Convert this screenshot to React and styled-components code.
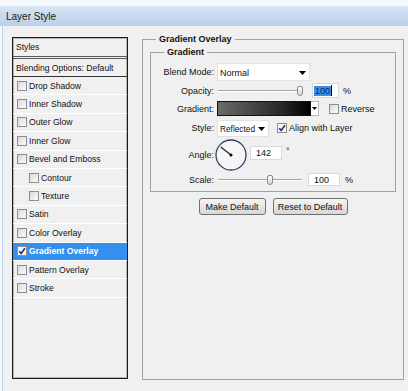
import React from 'react';
import styled, { createGlobalStyle } from 'styled-components';

const GlobalStyle = createGlobalStyle`
  html, body {
    margin: 0;
    padding: 0;
  }
  body {
    width: 408px;
    height: 391px;
    overflow: hidden;
    background: #f5f8fc;
    font-family: "Liberation Sans", Arial, sans-serif;
    color: #111111;
  }
`;

const Window = styled.div`
  height: 391px;
  padding-top: 6px;
  box-sizing: border-box;
  display: flex;
  flex-direction: column;
`;

const TitleBar = styled.div`
  height: 20px;
  display: flex;
  align-items: center;
  padding-left: 6px;
  background: linear-gradient(#d8e5f4, #b9cfe9);
  font-size: 10px;
  color: #1a1a1a;
`;

const Body = styled.div`
  flex: 1;
  margin-left: 2px;
  border-left: 1px solid #bcd0e8;
  background: #f0f0f0;
  display: flex;
  align-items: flex-start;
  gap: 14px;
  padding: 7px 4px 0 9px;
`;

const StylesPanel = styled.div`
  margin-top: 4px;
  width: 116px;
  height: 342px;
  box-sizing: border-box;
  border: 1px solid #1c1c1c;
  box-shadow: inset 0 0 0 1px rgba(0, 0, 0, 0.25);
  background: #f0f0f0;
  font-size: 8.6px;
`;

const PanelHead = styled.div`
  height: 18px;
  display: flex;
  align-items: center;
  padding-left: 3px;
  border-bottom: 3px double #5a5a5a;
`;

const BlendingRow = styled.div`
  height: 17px;
  display: flex;
  align-items: center;
  padding-left: 3px;
  border-bottom: 1px solid #333333;
`;

const StyleRow = styled.div`
  height: 18.4px;
  box-sizing: border-box;
  display: flex;
  align-items: center;
  gap: 2px;
  padding-left: ${(p) => (p.$indent ? 16 : 4)}px;
  border-bottom: 1px solid #ffffff;
  background: ${(p) => (p.$active ? '#3390ee' : 'transparent')};
  color: ${(p) => (p.$active ? '#ffffff' : '#111111')};
  font-weight: ${(p) => (p.$active ? 'bold' : 'normal')};
`;

const Box = styled.span`
  flex: none;
  width: 10px;
  height: 10px;
  box-sizing: border-box;
  border: 1px solid #8c8d8d;
  background: ${(p) => (p.$checked ? '#f8f8f8' : 'linear-gradient(135deg, #d9d9d9, #fbfbfb)')};
  display: inline-flex;
  align-items: center;
  justify-content: center;
`;

const Group = styled.fieldset`
  margin: 0;
  min-width: 0;
  box-sizing: border-box;
  width: ${(p) => p.$w}px;
  height: ${(p) => p.$h}px;
  border: 1px solid #a2a2a2;
  padding: ${(p) => p.$pad};
`;

const Legend = styled.legend`
  font-size: 9px;
  font-weight: bold;
  line-height: 12px;
  padding: 0 3px;
  margin-left: ${(p) => p.$ml}px;
`;

const FieldRow = styled.div`
  display: flex;
  align-items: center;
  height: ${(p) => p.$h}px;
  margin-top: ${(p) => p.$mt || 0}px;
  font-size: 9px;
`;

const Label = styled.span`
  flex: none;
  width: 63px;
  padding-right: 3px;
  text-align: right;
`;

const Select = styled.div`
  flex: none;
  width: ${(p) => p.$w}px;
  height: ${(p) => p.$h}px;
  box-sizing: border-box;
  background: #ffffff;
  border: 1px solid #e2e2e2;
  display: flex;
  align-items: center;
  justify-content: space-between;
  padding: 2px 3px 0 2px;
  font-size: ${(p) => p.$fs || 9}px;
  white-space: nowrap;
`;

const Slider = styled.div`
  position: relative;
  flex: none;
  width: ${(p) => p.$w}px;
  height: 12px;
  margin-left: 1px;
  &::before {
    content: '';
    position: absolute;
    left: 0;
    right: 0;
    top: 5px;
    height: 1px;
    background: #a4a4a4;
    border-bottom: 1px solid #ffffff;
  }
`;

const Thumb = styled.span`
  position: absolute;
  top: 1px;
  width: 6px;
  height: 10px;
  box-sizing: border-box;
  border: 1px solid #8a8a8a;
  border-radius: 2px 2px 3px 3px;
  background: linear-gradient(#fdfdfd, #d6d6d6);
`;

const NumInput = styled.div`
  flex: none;
  width: ${(p) => p.$w}px;
  height: ${(p) => p.$h}px;
  box-sizing: border-box;
  margin-left: ${(p) => p.$ml}px;
  margin-bottom: ${(p) => p.$mb || 0}px;
  background: #ffffff;
  border: 1px solid #d9d9d9;
  display: flex;
  align-items: center;
  padding-left: ${(p) => p.$pl}px;
`;

const Selected = styled.span`
  background: #3b8ee6;
  color: #0d2470;
  padding: 0 1px;
`;

const Caret = styled.span`
  width: 1px;
  height: 11px;
  background: #000000;
`;

const Unit = styled.span`
  margin-left: ${(p) => p.$ml}px;
  align-self: ${(p) => (p.$top ? 'flex-start' : 'center')};
  margin-top: ${(p) => (p.$top ? 7 : 0)}px;
`;

const Swatch = styled.div`
  width: 94px;
  height: 15px;
  box-sizing: border-box;
  border: 1px solid #111111;
  background: linear-gradient(to right, #6b6b6b, #262626 70%, #000000);
`;

const SwatchDrop = styled.div`
  width: 8px;
  height: 15px;
  box-sizing: border-box;
  border: 1px solid #b8b8b8;
  border-left: none;
  background: #ffffff;
  display: flex;
  align-items: center;
  justify-content: center;
`;

const CheckLabel = styled.label`
  display: flex;
  align-items: center;
  gap: 2px;
  margin-left: ${(p) => p.$ml}px;
`;

const Dial = styled.svg`
  flex: none;
  margin-left: -2px;
`;

const ButtonRow = styled.div`
  display: flex;
  justify-content: center;
  gap: 7px;
  margin-top: 6px;
`;

const Button = styled.button`
  width: ${(p) => p.$w}px;
  height: 17px;
  padding: 0;
  border: 1px solid #707070;
  border-radius: 3px;
  background: linear-gradient(#f6f6f6, #e6e6e6 50%, #d8d8d8);
  font-family: "Liberation Sans", Arial, sans-serif;
  font-size: 9px;
  color: #111111;
`;

const Arrow = ({ w = 7, h = 4 }) => (
  <svg width={w} height={h} viewBox="0 0 7 4">
    <path d="M0 0H7L3.5 4Z" fill="#000" />
  </svg>
);

const Check = () => (
  <svg width="8" height="8" viewBox="0 0 8 8">
    <path d="M1.2 4.2L3.2 6.4L6.9 1.3" fill="none" stroke="#1b2f86" strokeWidth="1.6" />
  </svg>
);

const CheckBox = ({ checked }) => <Box $checked={checked}>{checked && <Check />}</Box>;

const effects = [
  { name: 'Drop Shadow' },
  { name: 'Inner Shadow' },
  { name: 'Outer Glow' },
  { name: 'Inner Glow' },
  { name: 'Bevel and Emboss' },
  { name: 'Contour', indent: true },
  { name: 'Texture', indent: true },
  { name: 'Satin' },
  { name: 'Color Overlay' },
  { name: 'Gradient Overlay', active: true },
  { name: 'Pattern Overlay' },
  { name: 'Stroke' },
];

const angle = 142;
const rad = (angle * Math.PI) / 180;

export default function App() {
  return (
    <Window>
      <GlobalStyle />
      <TitleBar>Layer Style</TitleBar>
      <Body>
        <StylesPanel>
          <PanelHead>Styles</PanelHead>
          <BlendingRow>Blending Options: Default</BlendingRow>
          {effects.map((e) => (
            <StyleRow key={e.name} $indent={e.indent} $active={e.active}>
              <CheckBox checked={e.active} />
              {e.name}
            </StyleRow>
          ))}
        </StylesPanel>

        <Group $w={262} $h={347} $pad="1px 7px 0 7px">
          <Legend $ml={6}>Gradient Overlay</Legend>
          <Group $w={246} $h={146} $pad="5px 0 0 0">
            <Legend $ml={13}>Gradient</Legend>

            <FieldRow $h={18}>
              <Label>Blend Mode:</Label>
              <Select $w={93} $h={18}>
                Normal
                <Arrow />
              </Select>
            </FieldRow>

            <FieldRow $h={17} $mt={1}>
              <Label>Opacity:</Label>
              <Slider $w={85}>
                <Thumb style={{ left: 79 }} />
              </Slider>
              <NumInput $w={27} $h={15} $ml={9} $pl={1}>
                <Selected>100</Selected>
                <Caret />
              </NumInput>
              <Unit $ml={4}>%</Unit>
            </FieldRow>

            <FieldRow $h={17} $mt={1}>
              <Label>Gradient:</Label>
              <Swatch />
              <SwatchDrop>
                <Arrow w={5} h={3} />
              </SwatchDrop>
              <CheckLabel $ml={10}>
                <CheckBox />
                Reverse
              </CheckLabel>
            </FieldRow>

            <FieldRow $h={18} $mt={2}>
              <Label>Style:</Label>
              <Select $w={52} $h={17} $fs={8.3}>
                Reflected
                <Arrow />
              </Select>
              <CheckLabel $ml={8}>
                <CheckBox checked />
                Align with Layer
              </CheckLabel>
            </FieldRow>

            <FieldRow $h={32} $mt={2}>
              <Label>Angle:</Label>
              <Dial width="32" height="32" viewBox="0 0 32 32">
                <circle cx="16" cy="16" r="15" fill="#f6f6f6" stroke="#34406a" strokeWidth="1.3" />
                <line
                  x1="16"
                  y1="16"
                  x2={16 + 13 * Math.cos(rad)}
                  y2={16 - 13 * Math.sin(rad)}
                  stroke="#1a1a1a"
                  strokeWidth="1.1"
                />
                <circle cx="16" cy="16" r="1.5" fill="#000" />
              </Dial>
              <NumInput $w={32} $h={14} $ml={3} $pl={5} $mb={4}>
                142
              </NumInput>
              <Unit $ml={4} $top>
                °
              </Unit>
            </FieldRow>

            <FieldRow $h={15} $mt={1}>
              <Label>Scale:</Label>
              <Slider $w={84}>
                <Thumb style={{ left: 49 }} />
              </Slider>
              <NumInput $w={32} $h={13} $ml={6} $pl={5}>
                100
              </NumInput>
              <Unit $ml={5}>%</Unit>
            </FieldRow>
          </Group>

          <ButtonRow>
            <Button $w={67}>Make Default</Button>
            <Button $w={75}>Reset to Default</Button>
          </ButtonRow>
        </Group>
      </Body>
    </Window>
  );
}
